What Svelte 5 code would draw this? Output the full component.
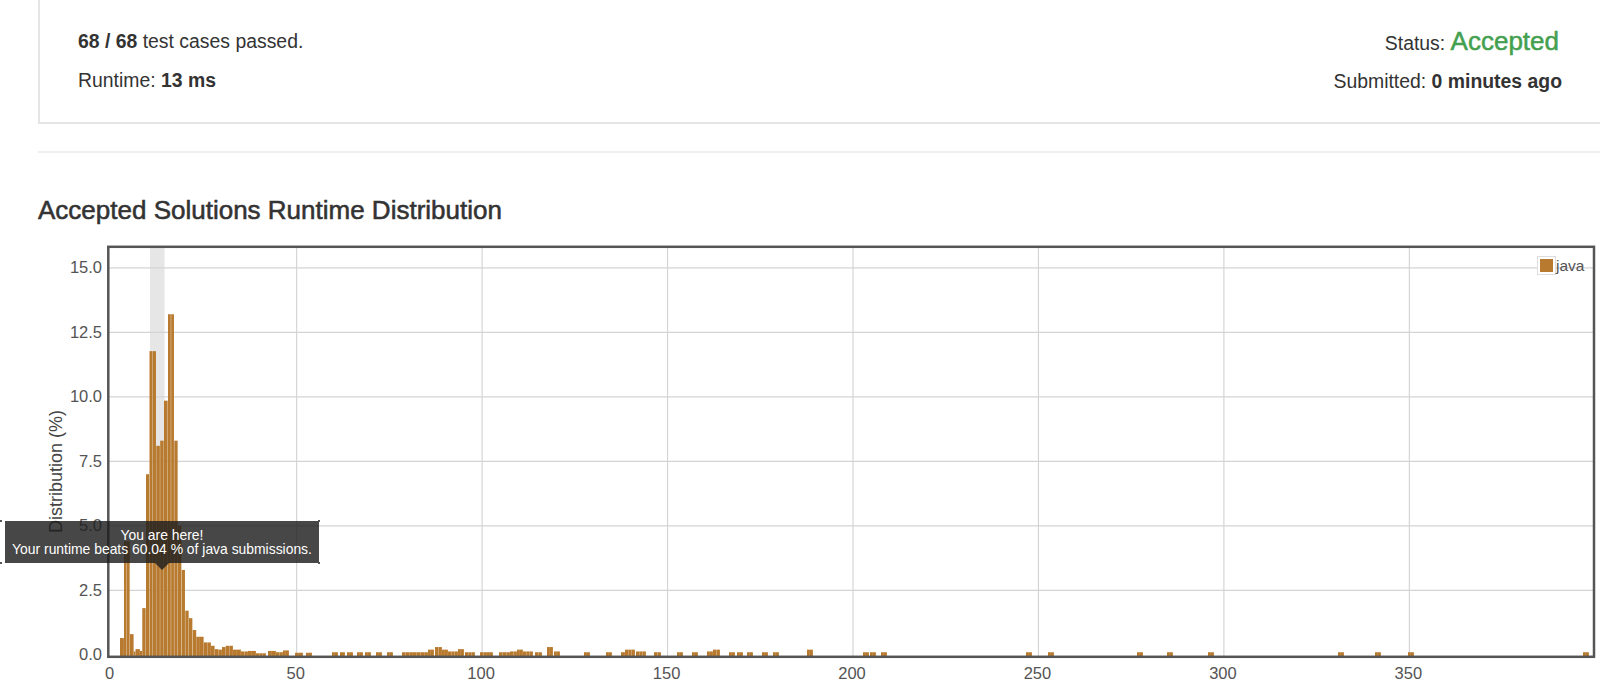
<script>
  const X = (v) => 111.2 + 3.709 * v;
  const Y = (v) => 653.8 - 25.8 * v;

  // measured runs of bars: [left px, right px, value]
  const runs = [
    [120, 124, 0.65], [124, 130, 4.4], [130, 133.7, 0.8], [133.7, 135.5, 0.13],
    [135.5, 140, 0.22], [140, 142.3, 0.15], [142.3, 146, 1.81], [146, 149.5, 7.0],
    [149.5, 156.3, 11.77], [156.3, 160.2, 8.1], [160.2, 164, 8.3], [164, 168, 9.85],
    [168, 174.3, 13.2], [174.3, 178, 8.3], [178, 181.7, 5.0], [181.7, 185.3, 3.29],
    [185.3, 189, 1.71], [189, 192.7, 1.42], [192.7, 196.3, 0.96], [196.3, 203.7, 0.7],
    [203.7, 211, 0.48], [211, 214.7, 0.35], [214.7, 218.4, 0.22], [218.4, 222, 0.2],
    [222, 225.7, 0.3], [225.7, 233, 0.35], [233, 241, 0.2], [241, 248, 0.13],
    [248, 256, 0.15], [256, 266, 0.06], [268, 276, 0.15], [276, 283, 0.1],
    [283, 289, 0.17], [295, 303, 0.08], [306, 312, 0.08], [332, 338, 0.1],
    [340, 345, 0.1], [347, 353, 0.1], [357, 363, 0.1], [365, 371, 0.1],
    [376, 382, 0.1], [387, 393, 0.1], [402, 413, 0.1], [413, 428, 0.1],
    [428, 434, 0.2], [435, 442, 0.3], [442, 448, 0.2], [448, 458, 0.13],
    [458, 464, 0.22], [465, 475, 0.1], [480, 487, 0.1], [487, 493, 0.1],
    [499, 510, 0.1], [510, 517, 0.13], [517, 523, 0.2], [523, 533, 0.13],
    [535, 542, 0.1], [547, 553, 0.3], [554, 560, 0.13], [584, 590, 0.1],
    [606, 612, 0.1], [621, 625, 0.1], [625, 635, 0.2], [636, 646, 0.13],
    [654, 661, 0.1], [677, 683, 0.1], [692, 698, 0.1], [707, 713, 0.13],
    [713, 720, 0.2], [729, 735, 0.1], [737, 743, 0.1], [747, 753, 0.1],
    [762, 768, 0.1], [773, 779, 0.1], [807, 813, 0.2], [863, 869, 0.1],
    [870, 876, 0.1], [881, 887, 0.1], [1026, 1032, 0.1], [1048, 1054, 0.1],
    [1137, 1143, 0.1], [1167, 1173, 0.1], [1208, 1214, 0.1], [1338, 1344, 0.1],
    [1375, 1381, 0.1], [1408, 1414, 0.1], [1583, 1589, 0.1]
  ];

  const bars = runs.flatMap(([a, b, v]) => {
    const n = Math.max(1, Math.round((b - a) / 3.67));
    const w = (b - a) / n;
    const gap = v < 1 ? 0.1 : 0.35;
    return Array.from({ length: n }, (_, i) => ({ x: a + i * w, w: w - gap, y: Y(v), h: 655 - Y(v) }));
  });

  const xTicks = [50, 100, 150, 200, 250, 300, 350];
  const yTicks = [0, 2.5, 5, 7.5, 10, 12.5, 15];
</script>

<main class="page">
  <section class="panel">
    <div class="col">
      <p><b>68 / 68</b> test cases passed.</p>
      <p>Runtime: <b>13 ms</b></p>
    </div>
    <div class="col right">
      <p class="status">Status: <span class="ok">Accepted</span></p>
      <p>Submitted: <b>0 minutes ago</b></p>
    </div>
  </section>
  <hr class="divider" />
  <h3>Accepted Solutions Runtime Distribution</h3>
  <div class="chart">
    <svg viewBox="0 240 1600 447" width="1600" height="447" role="img" aria-label="Runtime distribution chart">
      <rect x="150" y="247" width="14.5" height="408" fill="#e6e6e6" />
      {#each xTicks as t}
        <line x1={X(t)} x2={X(t)} y1="247" y2="655" stroke="#d2d2d6" stroke-width="1.1" />
        <text class="tick" x={X(t) - 1} y="677.5" text-anchor="middle">{t}</text>
      {/each}
      <text class="tick" x="109.5" y="677.5" text-anchor="middle">0</text>
      {#each yTicks as t}
        {#if t > 0}
          <line x1="109" x2="1594" y1={Y(t)} y2={Y(t)} stroke="#d4d4d4" stroke-width="1.2" />
        {/if}
        <text class="tick" x="102" y={Y(t) + 5.5} text-anchor="end">{t.toFixed(1)}</text>
      {/each}
      {#each bars as b}
        <rect x={b.x} y={b.y} width={b.w} height={b.h} fill="#b87a2f" />
      {/each}
      <rect x="108.3" y="245.8" width="1485.7" height="410" fill="none" stroke="#555" stroke-width="2.5" />
      <text class="title" transform="translate(62 532) rotate(-90)">Distribution (%)</text>
      <rect x="1537.5" y="255.5" width="18" height="18" fill="#fff" stroke="#ddd" />
      <rect x="1540" y="258" width="13" height="13" fill="#b87a2f" />
      <text class="legend" x="1556" y="269.5">java</text>
    </svg>
    <div class="tip">
      <span>You are here!</span>
      <span>Your runtime beats 60.04 % of java submissions.</span>
      <i class="dot tl"></i><i class="dot bl"></i><i class="dot tr"></i><i class="dot br"></i>
    </div>
  </div>
</main>

<style>
  :global(body) {
    margin: 0;
    background: #fff;
    overflow: hidden;
  }
  .page {
    width: 1600px;
    height: 687px;
    overflow: hidden;
    font-family: "Liberation Sans", Arial, sans-serif;
    color: #333;
  }
  .panel {
    box-sizing: border-box;
    height: 124px;
    margin-left: 38px;
    padding: 31px 38px 0 38px;
    display: flex;
    justify-content: space-between;
    border-left: 2px solid #e5e5e5;
    border-bottom: 2px solid #e5e5e5;
    font-size: 19.4px;
  }
  .col {
    display: flex;
    flex-direction: column;
    gap: 18px;
  }
  .right {
    align-items: flex-end;
    gap: 17px;
  }
  p {
    margin: 0;
    line-height: 21px;
  }
  .status {
    padding-right: 3px;
  }
  .ok {
    color: #43a04f;
    font-size: 26px;
    -webkit-text-stroke: 0.5px #43a04f;
  }
  .divider {
    margin: 27px 0 0 38px;
    border: 0;
    border-top: 2px solid #f0f0f0;
  }
  h3 {
    margin: 0;
    height: 88px;
    padding: 39px 0 0 38px;
    box-sizing: border-box;
    font-size: 26px;
    line-height: 36px;
    font-weight: 400;
    color: #333;
    -webkit-text-stroke: 0.55px #333;
  }
  .chart {
    position: relative;
    height: 447px;
  }
  svg {
    display: block;
  }
  .tick {
    font-size: 16.5px;
    fill: #545454;
  }
  .legend {
    font-size: 15.5px;
    fill: #545454;
  }
  .title {
    font-size: 18px;
    fill: #444;
  }
  .tip {
    position: absolute;
    left: 5px;
    top: 280px;
    width: 314px;
    height: 42px;
    display: flex;
    flex-direction: column;
    align-items: center;
    justify-content: center;
    background: rgba(30, 30, 30, 0.82);
    color: #fff;
    font-size: 13.9px;
    line-height: 14px;
  }
  .tip::after {
    content: "";
    position: absolute;
    left: 150px;
    top: 100%;
    border: 7px solid transparent;
    border-bottom: 0;
    border-top-color: rgba(30, 30, 30, 0.82);
  }
  .dot {
    position: absolute;
    width: 2px;
    height: 2px;
    background: #555;
  }
  .tl { left: -5px; top: -1px; }
  .bl { left: -5px; bottom: -1px; }
  .tr { right: -1px; top: -1px; }
  .br { right: -1px; bottom: -1px; }
</style>
